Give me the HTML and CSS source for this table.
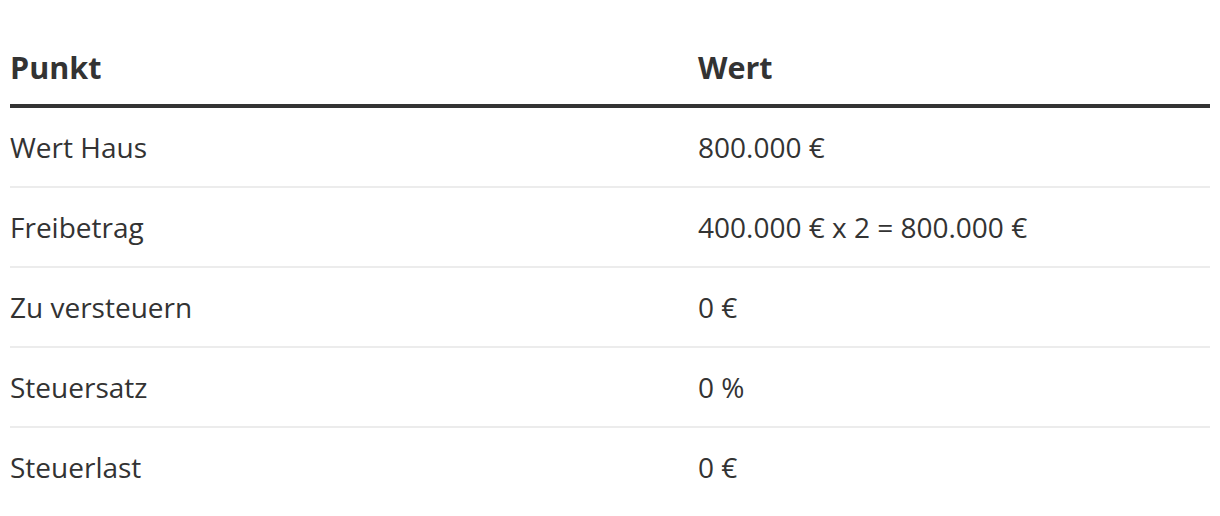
FILE: index.html
```html
<!DOCTYPE html>
<html lang="de">
<head>
<meta charset="utf-8">
<title>Tabelle</title>
<link rel="stylesheet" href="styles.css">
</head>
<body>
<div class="wrap">
  <table class="tax">
    <thead>
      <tr><th class="c1">Punkt</th><th>Wert</th></tr>
    </thead>
    <tbody>
      <tr><td>Wert Haus</td><td>800.000 €</td></tr>
      <tr><td>Freibetrag</td><td>400.000 € x 2 = 800.000 €</td></tr>
      <tr><td>Zu versteuern</td><td>0 €</td></tr>
      <tr><td>Steuersatz</td><td>0 %</td></tr>
      <tr><td>Steuerlast</td><td>0 €</td></tr>
    </tbody>
  </table>
</div>
</body>
</html>
```
FILE: styles.css
```css
html, body {
  margin: 0;
  padding: 0;
  background: #fff;
}
.wrap {
  padding: 28px 10px 0 10px;
}
.tax {
  width: 1200px;
  border-collapse: collapse;
  font-family: "Open Sans", "Liberation Sans", sans-serif;
  font-size: 28px;
  line-height: 38px;
  color: #333;
  table-layout: fixed;
}
.tax th, .tax td {
  text-align: left;
  padding: 20px 0;
  vertical-align: middle;
}
.tax th {
  font-size: 30.5px;
  font-weight: 700;
  padding-bottom: 18px;
  border-bottom: 4px solid #333;
}
.tax .c1 {
  width: 688px;
}
.tax tbody tr + tr td {
  border-top: 2px solid #ececec;
}
```
